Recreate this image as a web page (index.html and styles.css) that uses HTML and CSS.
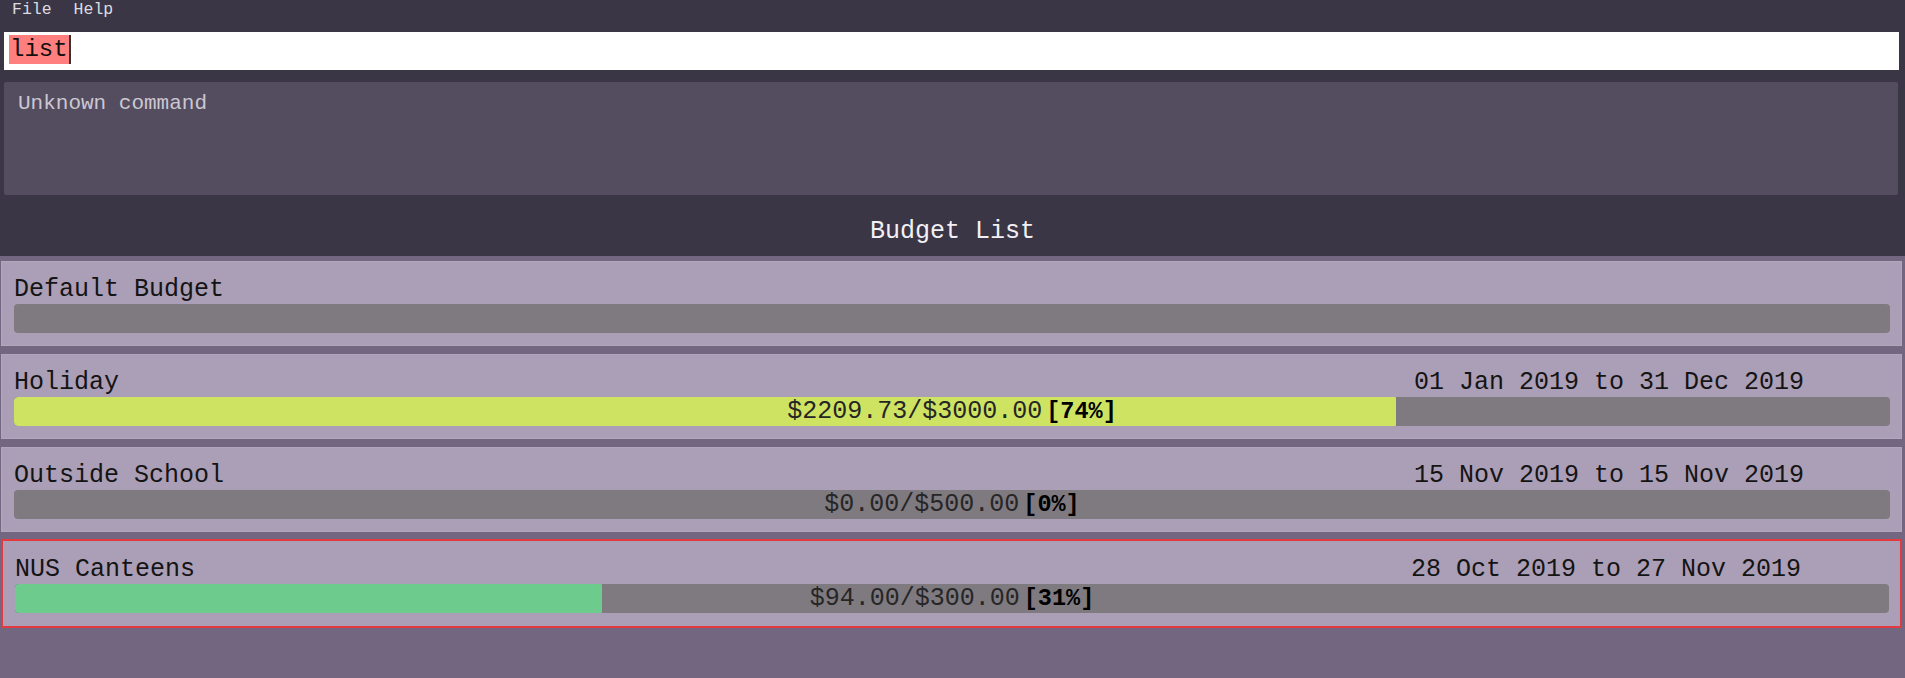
FILE: index.html
```html
<!DOCTYPE html>
<html>
<head>
<meta charset="utf-8">
<link rel="stylesheet" href="styles.css">
</head>
<body>
<div class="app">
  <div class="menubar">
    <span class="menu-item">File</span>
    <span class="menu-item">Help</span>
  </div>
  <div class="command">
    <div class="command-input"><span class="typed">list</span><span class="caret"></span></div>
  </div>
  <div class="result">Unknown command</div>
  <div class="header">Budget List</div>
  <div class="list">
    <div class="card">
      <div class="card-row"><span class="name">Default Budget</span></div>
      <div class="bar"></div>
    </div>
    <div class="card">
      <div class="card-row"><span class="name">Holiday</span><span class="period">01 Jan 2019 to 31 Dec 2019</span></div>
      <div class="bar">
        <div class="fill fill-yellow" style="width: 73.66%"></div>
        <div class="bar-label"><span class="amount">$2209.73/$3000.00</span><span class="percent">[74%]</span></div>
      </div>
    </div>
    <div class="card">
      <div class="card-row"><span class="name">Outside School</span><span class="period">15 Nov 2019 to 15 Nov 2019</span></div>
      <div class="bar">
        <div class="bar-label"><span class="amount">$0.00/$500.00</span><span class="percent">[0%]</span></div>
      </div>
    </div>
    <div class="card card-selected">
      <div class="card-row"><span class="name">NUS Canteens</span><span class="period">28 Oct 2019 to 27 Nov 2019</span></div>
      <div class="bar">
        <div class="fill fill-green" style="width: 31.33%"></div>
        <div class="bar-label"><span class="amount">$94.00/$300.00</span><span class="percent">[31%]</span></div>
      </div>
    </div>
  </div>
</div>
</body>
</html>
```

FILE: styles.css
```css
html, body {
  margin: 0;
  padding: 0;
}

body {
  background: #3b3646;
  font-family: "Liberation Mono", "Courier New", monospace;
  width: 1905px;
  height: 678px;
  overflow: hidden;
}

.app {
  display: flex;
  flex-direction: column;
  height: 678px;
}

.menubar {
  display: flex;
  height: 26px;
  padding-left: 12px;
  gap: 22px;
  align-items: flex-start;
}

.menu-item {
  font-size: 16.5px;
  line-height: 20px;
  color: #dcdce0;
}

.command {
  padding: 6px 6px 0 4px;
}

.command-input {
  height: 38px;
  background: #ffffff;
  box-sizing: border-box;
  padding: 3px 0 0 5px;
  display: flex;
  align-items: flex-start;
}

.typed {
  background: #ff7f7f;
  color: #111;
  font-size: 24px;
  line-height: 29px;
  padding: 0 1px;
}

.caret {
  width: 2px;
  height: 29px;
  background: #3a3030;
}

.result {
  margin: 12px 7px 0 4px;
  height: 113px;
  box-sizing: border-box;
  background: #544d5f;
  border-radius: 2px;
  padding: 9px 14px;
  font-size: 21px;
  line-height: 26px;
  color: #cbc7d2;
}

.header {
  height: 61px;
  box-sizing: border-box;
  padding-top: 22px;
  text-align: center;
  font-size: 25px;
  line-height: 29px;
  color: #f2f0f5;
}

.list {
  flex: 1;
  background: #736681;
  padding: 5px 3px 0 1px;
  display: flex;
  flex-direction: column;
  gap: 8px;
}

.card {
  height: 85px;
  box-sizing: border-box;
  background: #ab9eb7;
  border: 1px solid #b2a6bd;
  padding: 13px 11px 12px 12px;
  display: flex;
  flex-direction: column;
}

.card-selected {
  height: 89px;
  margin-top: -1px;
  border: 2px solid #e3393f;
  padding: 14px 11px 13px 12px;
}

.card-row {
  display: flex;
  justify-content: space-between;
  height: 29px;
  font-size: 25px;
  line-height: 29px;
  color: #141414;
}

.period {
  margin-right: 86px;
}

.card-selected .period {
  margin-right: 88px;
}

.bar {
  position: relative;
  height: 29px;
  background: #7f7a80;
  border-radius: 4px;
  overflow: hidden;
}

.fill {
  height: 100%;
  border-radius: 4px 1px 1px 4px;
}

.fill-yellow {
  background: #cfe362;
}

.fill-green {
  background: #6dcb8e;
}

.bar-label {
  position: absolute;
  inset: 0;
  display: flex;
  justify-content: center;
  align-items: center;
  gap: 4px;
  line-height: 29px;
}

.amount {
  font-size: 25px;
  color: #262626;
}

.percent {
  font-size: 23.5px;
  font-weight: bold;
  color: #000;
}
```
